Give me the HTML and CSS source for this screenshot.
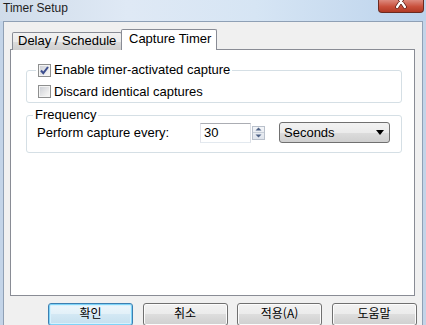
FILE: index.html
```html
<!DOCTYPE html>
<html lang="ko">
<head>
<meta charset="utf-8">
<title>Timer Setup</title>
<link rel="stylesheet" href="styles.css">
</head>
<body>
<div class="titlebar">
  <span class="title">Timer Setup</span>
  <div class="close">
    <svg width="46" height="13" viewBox="0 0 46 13">
      <path d="M19.5 -5 L27.5 7 M27.5 -5 L19.5 7" stroke="#5a1a12" stroke-width="4" stroke-linecap="round"/>
      <path d="M19.5 -5 L27.5 7 M27.5 -5 L19.5 7" stroke="#ffffff" stroke-width="2.4" stroke-linecap="round"/>
    </svg>
  </div>
</div>
<div class="client">
  <div class="tabs">
    <div class="tab">Delay / Schedule</div>
    <div class="tab tab-active">Capture Timer</div>
  </div>
  <div class="panel">
    <fieldset class="group group-capture">
      <legend class="legend">
        <span class="check-row">
          <span class="checkbox">
            <svg width="11" height="11" viewBox="0 0 11 11"><path d="M2 5.5 L4.3 8.2 L9 2" fill="none" stroke="#3d4f8f" stroke-width="2"/></svg>
          </span>
          <span>Enable timer-activated capture</span>
        </span>
      </legend>
      <div class="check-row row-second">
        <span class="checkbox"></span>
        <span>Discard identical captures</span>
      </div>
    </fieldset>
    <fieldset class="group group-freq">
      <legend class="legend legend-text">Frequency</legend>
      <div class="freq-row">
        <span class="freq-label">Perform capture every:</span>
        <span class="textbox">30</span>
        <span class="spin">
          <span class="spin-btn"><svg width="7" height="4" viewBox="0 0 7 4"><path d="M0.5 3.5 L3.5 0.5 L6.5 3.5 Z" fill="#4d6185"/></svg></span>
          <span class="spin-btn"><svg width="7" height="4" viewBox="0 0 7 4"><path d="M0.5 0.5 L3.5 3.5 L6.5 0.5 Z" fill="#4d6185"/></svg></span>
        </span>
        <span class="select">
          <span>Seconds</span>
          <svg class="select-arrow" width="8" height="5" viewBox="0 0 8 5"><path d="M0 0 L8 0 L4 5 Z" fill="#000"/></svg>
        </span>
      </div>
    </fieldset>
  </div>
  <div class="buttons">
    <div class="btn btn-default">확인</div>
    <div class="btn">취소</div>
    <div class="btn">적용(A)</div>
    <div class="btn">도움말</div>
  </div>
</div>
</body>
</html>
```
FILE: styles.css
```css
* { box-sizing: border-box; }
html, body { margin: 0; padding: 0; }
body {
  width: 426px;
  height: 325px;
  overflow: hidden;
  background: #c3d4e8;
  font-family: "Liberation Sans", Arial, sans-serif;
  font-size: 13px;
  color: #000;
}
.titlebar {
  height: 21px;
  display: flex;
  align-items: flex-start;
  padding-left: 3px;
  background: linear-gradient(90deg, #d0dcea 0%, #dfe9f5 30%, #d6e5f4 60%, #bcd3ec 100%);
}
.title {
  font-size: 12px;
  line-height: 14px;
  margin-top: 1px;
  color: #1e1e1e;
}
.close {
  margin-left: auto;
  margin-right: 2px;
  width: 46px;
  height: 13px;
  background: linear-gradient(#dd8a7e, #c9503c 55%, #b13a25);
  border: 1px solid #6b2a20;
  border-top: none;
  border-radius: 0 0 4px 4px;
  overflow: hidden;
  display: flex;
}
.close svg { margin-left: -1px; }
.client {
  margin: 0 3px;
  height: 304px;
  background: #f0f0f0;
  border: 1px solid #8fa0b5;
  border-bottom: none;
  padding: 7px 0 0 6px;
}
.tabs {
  display: flex;
  align-items: flex-end;
  height: 21px;
  margin: 0 0 -1px 2px;
}
.tab {
  width: 110px;
  height: 18px;
  padding-left: 5px;
  line-height: 16px;
  border: 1px solid #898c95;
  border-bottom: none;
  border-radius: 2px 2px 0 0;
  background: linear-gradient(#f2f2f2, #ebebeb 50%, #dddddd 50%, #cfcfcf);
  white-space: nowrap;
}
.tab-active {
  position: relative;
  width: 96px;
  height: 21px;
  margin-left: -1px;
  padding-left: 7px;
  line-height: 17px;
  background: #fff;
}
.panel {
  width: 405px;
  height: 247px;
  background: #fff;
  border: 1px solid #898c95;
}
.group {
  width: 376px;
  margin: 0 0 0 15px;
  border: 1px solid #d5dfe5;
  border-radius: 3px;
  min-width: 0;
}
.group-capture {
  margin-top: 12px;
  padding: 0 0 3px 9px;
}
.group-freq {
  margin-top: 4px;
  padding: 0 0 9px 6px;
}
.legend {
  padding: 0 2px;
  line-height: 16px;
}
.check-row {
  display: flex;
  align-items: center;
  height: 16px;
  white-space: nowrap;
}
.row-second {
  margin: 5px 0 0 2px;
}
.checkbox {
  width: 13px;
  height: 13px;
  margin-right: 3px;
  border: 1px solid #8e8f8f;
  background: linear-gradient(135deg, #c9ccd3, #eeeeee 70%, #fafafa);
  box-shadow: inset 0 0 0 1px #f4f4f4;
  display: flex;
  align-items: center;
  justify-content: center;
}
.freq-row {
  display: flex;
  align-items: center;
  height: 21px;
  margin-top: -1px;
  padding-left: 4px;
}
.freq-label {
  width: 163px;
  white-space: nowrap;
}
.textbox {
  width: 51px;
  height: 20px;
  line-height: 18px;
  padding-left: 3px;
  border: 1px solid #abadb3;
  border-color: #abadb3 #dbdfe6 #e3e9ef #e2e3ea;
  background: #fff;
}
.spin {
  width: 13px;
  height: 14px;
  margin-left: 1px;
  display: flex;
  flex-direction: column;
  border: 1px solid #b9c0cb;
  background: linear-gradient(#f3f5f8, #dfe4ec);
}
.spin-btn {
  flex: 1;
  display: flex;
  align-items: center;
  justify-content: center;
}
.spin-btn + .spin-btn { border-top: 1px solid #c7ced8; }
.select {
  width: 111px;
  height: 21px;
  margin-left: 14px;
  padding: 0 5px 0 4px;
  display: flex;
  align-items: center;
  border: 1px solid #707070;
  border-radius: 3px;
  background: linear-gradient(#f2f2f2, #ebebeb 50%, #dddddd 50%, #cfcfcf);
}
.select-arrow { margin-left: auto; }
.buttons {
  display: flex;
  column-gap: 9.5px;
  margin: 7px 0 0 38px;
}
.btn {
  width: 85px;
  height: 23px;
  padding-bottom: 4px;
  display: flex;
  align-items: center;
  justify-content: center;
  font-family: "Noto Sans CJK KR", "Liberation Sans", sans-serif;
  font-size: 12px;
  border: 1px solid #707070;
  border-radius: 3px;
  background: linear-gradient(#f2f2f2, #ebebeb 50%, #dddddd 50%, #cfcfcf);
  box-shadow: inset 0 0 0 1px #fcfcfc;
}
.btn-default {
  border-color: #3c7fb1;
  background: linear-gradient(#edf6fb, #e2f0f8 50%, #d3e8f4 50%, #c4dfee);
  box-shadow: inset 0 0 0 1px #7fd3f7, inset 0 0 0 2px #d6f1fd;
}
```
